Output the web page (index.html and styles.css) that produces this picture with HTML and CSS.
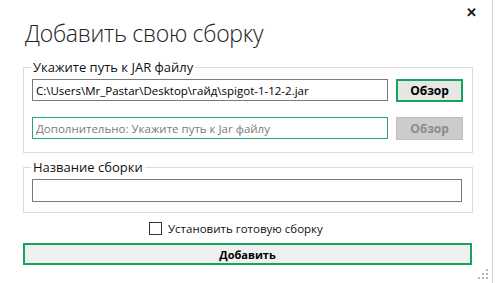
FILE: index.html
```html
<!DOCTYPE html>
<html>
<head>
    <title>Добавить свою сборку</title>
    <link rel="stylesheet" href="styles.css">
</head>
<body>
    <div class="window">
        <div class="close">&#x2715;</div>
        <h1 class="title">Добавить свою сборку</h1>

        <fieldset class="group group-jar">
            <legend>Укажите путь к JAR файлу</legend>
            <div class="row">
                <input type="text" class="path" value="C:\Users\Mr_Pastar\Desktop\гайд\spigot-1-12-2.jar">
                <button type="button" class="browse">Обзор</button>
            </div>
            <div class="row">
                <input type="text" class="path path-extra" placeholder="Дополнительно: Укажите путь к Jar файлу">
                <button type="button" class="browse" disabled>Обзор</button>
            </div>
        </fieldset>

        <fieldset class="group group-name">
            <legend>Название сборки</legend>
            <input type="text" class="name">
        </fieldset>

        <label class="check">
            <span class="box"></span>
            Установить готовую сборку
        </label>

        <button type="button" class="add">Добавить</button>

        <!-- resize grip -->
        <svg class="grip" width="12" height="12" viewBox="0 0 12 12">
            <rect x="9" y="1" width="2" height="2" fill="#b5b5b5"/>
            <rect x="5" y="5" width="2" height="2" fill="#b5b5b5"/>
            <rect x="9" y="5" width="2" height="2" fill="#b5b5b5"/>
            <rect x="1" y="9" width="2" height="2" fill="#b5b5b5"/>
            <rect x="5" y="9" width="2" height="2" fill="#b5b5b5"/>
            <rect x="9" y="9" width="2" height="2" fill="#b5b5b5"/>
        </svg>
    </div>
</body>
</html>
```

FILE: styles.css
```css
body {
    margin: 0;
    background-color: #fff;
    font-family: "Open Sans", "Noto Sans", sans-serif;
    color: #000;
}

.window {
    position: relative;
    width: 493px;
    height: 283px;
    border-right: 1px solid #cfcfcf;
    box-sizing: border-box;
    display: flex;
    flex-direction: column;
}

.close {
    position: absolute;
    top: 3px;
    left: 466px;
    font-size: 13px;
    font-weight: bold;
    color: #111;
}

.title {
    margin: 17px 0 0 25px;
    font-size: 23px;
    font-weight: 300;
    line-height: 32px;
    letter-spacing: -0.3px;
    color: #222;
}

.group {
    margin: 10px 23px 0 23px;
    padding: 0 9px 12px 8px;
    border: 1px solid #dcdcdc;
}

.group legend {
    margin-left: -1px;
    padding: 0 2px;
    font-size: 13px;
    line-height: 16px;
    color: #111;
}

.row {
    display: flex;
    gap: 8px;
    height: 23px;
    margin-top: 4px;
}

.row + .row {
    margin-top: 15px;
}

input[type="text"] {
    box-sizing: border-box;
    height: 23px;
    padding: 0 3px;
    border: 1px solid #7a7a7a;
    font-family: "Open Sans", "Noto Sans", sans-serif;
    font-size: 11.5px;
    color: #000;
    outline: none;
}

input.path {
    width: 356px;
    height: 22px;
}

input.path-extra {
    border-color: #2aa37c;
}

input.path-extra::placeholder {
    color: #7a7a7a;
}

.browse {
    width: 67px;
    height: 23px;
    padding: 0;
    border: 2px solid #18a35c;
    background-color: #e6e6e6;
    font-family: "Open Sans", "Noto Sans", sans-serif;
    font-size: 12px;
    font-weight: bold;
    color: #000;
}

.browse:disabled {
    border: 1px solid #bfbfbf;
    background-color: #cccccc;
    color: #8c8c8c;
}

.group-name {
    margin-top: 6px;
    padding-bottom: 10px;
    padding-right: 10px;
}

input.name {
    width: 430px;
    margin-top: 4px;
}

.check {
    display: flex;
    align-items: center;
    gap: 6px;
    margin: 7px 0 0 149px;
    height: 16px;
    font-size: 11.5px;
    color: #111;
}

.box {
    width: 11px;
    height: 11px;
    border: 1px solid #333;
    background-color: #fff;
}

.add {
    margin: 7px 20px 0 23px;
    height: 22px;
    padding: 0;
    border: 2px solid #18a35c;
    background-color: #efefef;
    font-family: "Open Sans", "Noto Sans", sans-serif;
    font-size: 11px;
    font-weight: bold;
    color: #000;
}

.grip {
    position: absolute;
    left: 477px;
    top: 268px;
}
```
